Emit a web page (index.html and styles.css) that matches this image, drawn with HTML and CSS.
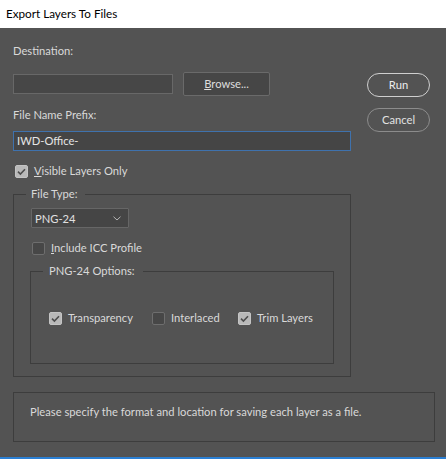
FILE: index.html
```html
<!DOCTYPE html>
<html>
<head>
<meta charset="utf-8">
<title>Export Layers To Files</title>
<link rel="stylesheet" href="styles.css">
</head>
<body>
<div class="window">
  <div class="titlebar">Export Layers To Files</div>
  <div class="content">
    <div class="main">
      <div class="left">
        <div class="label">Destination:</div>
        <div class="dest-row">
          <div class="input dest-input"></div>
          <div class="btn browse"><u>B</u>rowse...</div>
        </div>
        <div class="label prefix-label">File Name Prefix:</div>
        <div class="input prefix-input">IWD-Office-</div>
        <div class="check-row visible-row">
          <span class="cb checked"><svg viewBox="0 0 13 13" width="13" height="13"><path d="M3 6.6 L5.4 9 L10 4.2" fill="none" stroke="#4d4d4d" stroke-width="1.6"/></svg></span>
          <span class="cb-label"><u>V</u>isible Layers Only</span>
        </div>
        <fieldset class="group outer">
          <legend class="legend">File Type:</legend>
          <div class="select">
            <span>PNG-24</span>
            <svg class="chev" viewBox="0 0 8 5" width="8" height="5"><path d="M0.5 0.7 L4 4 L7.5 0.7" fill="none" stroke="#b5b5b5" stroke-width="1"/></svg>
          </div>
          <div class="check-row icc-row">
            <span class="cb"></span>
            <span class="cb-label"><u>I</u>nclude ICC Profile</span>
          </div>
          <fieldset class="group inner">
            <legend class="legend inner-legend">PNG-24 Options:</legend>
            <div class="options">
              <div class="check-row">
                <span class="cb checked"><svg viewBox="0 0 13 13" width="13" height="13"><path d="M3 6.6 L5.4 9 L10 4.2" fill="none" stroke="#4d4d4d" stroke-width="1.6"/></svg></span>
                <span class="cb-label">Transparency</span>
              </div>
              <div class="check-row">
                <span class="cb"></span>
                <span class="cb-label">Interlaced</span>
              </div>
              <div class="check-row">
                <span class="cb checked"><svg viewBox="0 0 13 13" width="13" height="13"><path d="M3 6.6 L5.4 9 L10 4.2" fill="none" stroke="#4d4d4d" stroke-width="1.6"/></svg></span>
                <span class="cb-label">Trim Layers</span>
              </div>
            </div>
          </fieldset>
        </fieldset>
      </div>
      <div class="right">
        <div class="pill run">Run</div>
        <div class="pill cancel">Cancel</div>
      </div>
    </div>
    <div class="message">Please specify the format and location for saving each layer as a file.</div>
  </div>
</div>
</body>
</html>
```
FILE: styles.css
```css
html, body {
  margin: 0;
  padding: 0;
}
body {
  width: 446px;
  height: 459px;
  overflow: hidden;
  font-family: "Lato", "Noto Sans", sans-serif;
  font-size: 11.2px;
}
.window {
  width: 446px;
  height: 459px;
  display: flex;
  flex-direction: column;
  background: #535353;
  border-bottom: 2px solid #2b7fd3;
  box-sizing: border-box;
}
.titlebar {
  height: 28px;
  line-height: 27px;
  background: #ffffff;
  color: #000000;
  padding-left: 6px;
  font-size: 11.7px;
}
.content {
  flex: 1;
  padding: 15px 11px 0 13px;
  color: #d9d9d9;
}
.main {
  display: flex;
}
.left {
  width: 338px;
  display: flex;
  flex-direction: column;
}
.right {
  margin-left: 16px;
  padding-top: 30px;
  display: flex;
  flex-direction: column;
  gap: 11px;
}
.label {
  line-height: 16px;
  height: 16px;
}
.dest-row {
  margin-top: 13px;
  height: 24px;
  display: flex;
  align-items: center;
}
.input {
  box-sizing: border-box;
  height: 20px;
  background: #474747;
  border: 1px solid #686868;
}
.dest-input {
  width: 160px;
}
.btn {
  box-sizing: border-box;
  height: 24px;
  width: 87px;
  margin-left: 10px;
  background: #464646;
  border: 1px solid #6a6a6a;
  border-radius: 2px;
  color: #dedede;
  text-align: center;
  line-height: 22px;
}
.prefix-label {
  margin-top: 11px;
}
.prefix-input {
  margin-top: 8px;
  width: 338px;
  background: #454545;
  border-color: #3f72ad;
  color: #e6e6e6;
  line-height: 18px;
  padding-left: 3px;
}
.check-row {
  display: flex;
  align-items: center;
  height: 16px;
  line-height: 16px;
}
.visible-row {
  margin-top: 12px;
  padding-left: 2px;
}
.cb {
  box-sizing: border-box;
  width: 13px;
  height: 13px;
  border-radius: 2px;
  background: #474747;
  border: 1px solid #6e6e6e;
  display: flex;
  flex-shrink: 0;
}
.cb.checked {
  background: #b9b9b9;
  border-color: #c4c4c4;
}
.cb.checked svg {
  margin: -1px;
}
.cb-label {
  margin-left: 6px;
  white-space: nowrap;
}
.group {
  margin: 0;
  border: 1px solid #3d3d3d;
  min-width: 0;
}
.outer {
  margin-top: 7px;
  padding: 0 16px 12px 17px;
}
.legend {
  padding: 0 8px 0 5px;
  margin-left: -5px;
  line-height: 16px;
}
.select {
  box-sizing: border-box;
  margin-top: 6px;
  width: 98px;
  height: 20px;
  background: #454545;
  border: 1px solid #666666;
  border-radius: 1px;
  display: flex;
  align-items: center;
  justify-content: space-between;
  padding: 0 7px 0 3px;
  color: #e0e0e0;
}
.chev {
  display: block;
}
.icc-row {
  margin-top: 12px;
  padding-left: 1px;
}
.inner {
  margin: 7px 0 0 -1px;
  padding: 0 0 37px 18px;
}
.inner-legend {
  margin-left: -6px;
  padding-left: 6px;
}
.options {
  margin-top: 31px;
  display: grid;
  grid-template-columns: 103px 86px auto;
}
.pill {
  box-sizing: border-box;
  width: 63px;
  height: 24px;
  border-radius: 12px;
  text-align: center;
  color: #ececec;
  line-height: 22px;
}
.run {
  border: 1.5px solid #cfcfcf;
  line-height: 21px;
}
.cancel {
  border: 1px solid #8c8c8c;
  color: #e2e2e2;
}
.message {
  box-sizing: border-box;
  margin-top: 15px;
  height: 50px;
  border: 1px solid #3d3d3d;
  padding: 11px 0 0 16px;
  line-height: 16px;
}
```
